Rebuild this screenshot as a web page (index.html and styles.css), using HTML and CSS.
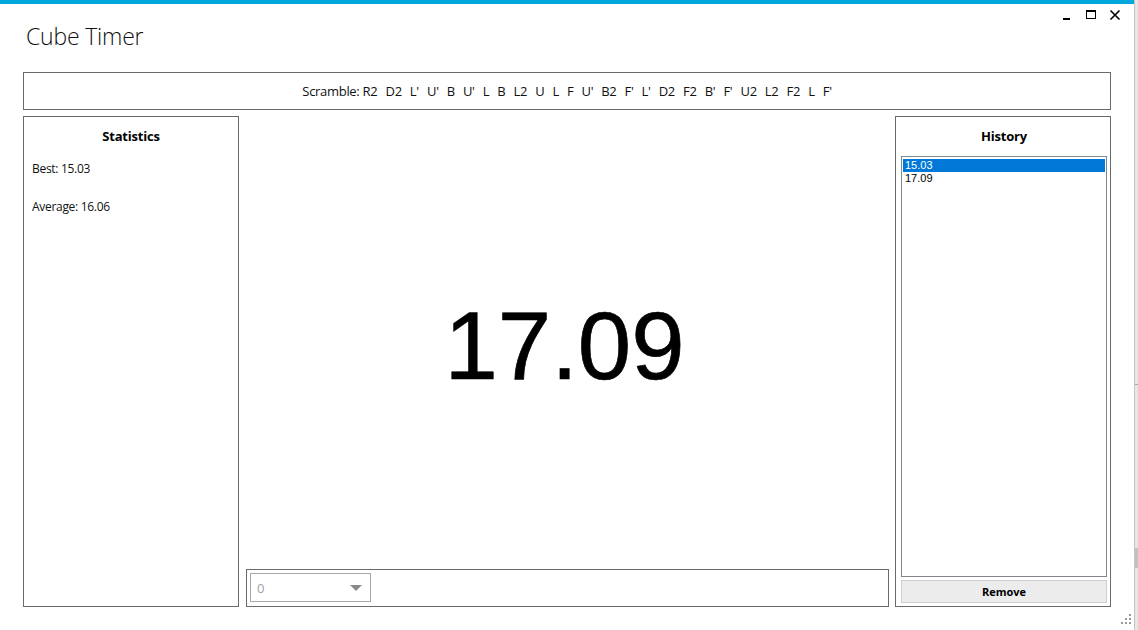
FILE: index.html
```html
<!DOCTYPE html>
<html>
<head>
<meta charset="utf-8">
<link rel="stylesheet" href="styles.css">
</head>
<body>
<div class="screen">
  <div class="window">
    <div class="header">
      <div class="title">Cube Timer</div>
      <div class="controls">
        <svg class="ctl" width="12" height="12" viewBox="0 0 12 12"><rect x="2" y="9" width="7" height="2" fill="#000"/></svg>
        <svg class="ctl" width="12" height="12" viewBox="0 0 12 12"><rect x="1.5" y="1.5" width="9" height="8" fill="none" stroke="#000" stroke-width="1"/><rect x="1" y="1" width="10" height="2" fill="#000"/></svg>
        <svg class="ctl" width="12" height="12" viewBox="0 0 12 12"><path d="M1.5 1.5 L10.5 10.5 M10.5 1.5 L1.5 10.5" stroke="#000" stroke-width="1.6"/></svg>
      </div>
    </div>
    <div class="scramble"><span class="scramble-text"><span class="scramble-label">Scramble: </span>R2 D2 L' U' B U' L B L2 U L F U' B2 F' L' D2 F2 B' F' U2 L2 F2 L F'</span></div>
    <div class="main">
      <div class="panel stats">
        <div class="panel-title">Statistics</div>
        <div class="stat">Best: 15.03</div>
        <div class="stat">Average: 16.06</div>
      </div>
      <div class="center">
        <div class="timer">17.09</div>
        <div class="bottom-bar">
          <div class="combo">
            <span class="combo-val">0</span>
            <span class="combo-arrow"></span>
          </div>
        </div>
      </div>
      <div class="panel history">
        <div class="panel-title">History</div>
        <div class="listbox">
          <div class="item selected">15.03</div>
          <div class="item">17.09</div>
        </div>
        <div class="remove">Remove</div>
      </div>
    </div>
    <div class="grip">
      <span></span><span></span><span></span><span></span><span></span><span></span>
    </div>
  </div>
  <div class="side-strip"></div>
</div>
</body>
</html>
```
FILE: styles.css
```css
* { box-sizing: border-box; }
html, body { margin: 0; padding: 0; background: #fff; }
body { width: 1138px; height: 630px; overflow: hidden; font-family: "Open Sans", "Noto Sans", sans-serif; }

.screen { display: flex; width: 1138px; height: 630px; }

.window {
  position: relative;
  width: 1134px;
  height: 630px;
  border-top: 4px solid #00a8dc;
  padding: 0 23px 0 23px;
  display: flex;
  flex-direction: column;
}

.side-strip {
  width: 4px;
  height: 630px;
  border-left: 1px solid #c4c4c4;
  background: #e6e6e6;
  position: relative;
}
.side-strip::after {
  content: "";
  position: absolute;
  left: 0; right: 0;
  top: 548px; height: 20px;
  background: #c2c2c2;
}
.side-strip::before {
  content: "";
  position: absolute;
  left: 0; right: 0;
  top: 384px; height: 1px;
  background: #a8a8a8;
}

.header {
  height: 68px;
  position: relative;
}
.title {
  position: absolute;
  left: 3px;
  top: 16px;
  font-family: "Open Sans", sans-serif;
  font-weight: 300;
  font-size: 23px;
  color: #111;
  letter-spacing: -0.2px;
}
.controls {
  position: absolute;
  right: -10px;
  top: 5px;
  display: flex;
  gap: 12px;
}
.ctl { display: block; }

.scramble {
  height: 38px;
  border: 1px solid #6a6a6a;
  text-align: center;
  padding-top: 6px;
}
.scramble-text {
  font-size: 13px;
  line-height: 17px;
  color: #111;
  letter-spacing: -0.3px;
  word-spacing: 5px;
}
.scramble-label { word-spacing: 0; }

.main {
  margin-top: 6px;
  height: 491px;
  display: grid;
  grid-template-columns: 216px 656px 216px;
}

.panel {
  border: 1px solid #6a6a6a;
}
.panel-title {
  text-align: center;
  font-weight: 700;
  font-size: 13px;
  color: #000;
  margin-top: 10px;
  line-height: 18px;
  letter-spacing: -0.2px;
}
.stats .panel-title { margin-bottom: 16px; }
.stat {
  font-size: 12px;
  color: #111;
  padding-left: 8px;
  line-height: 16px;
  margin-bottom: 22px;
  letter-spacing: -0.3px;
}

.center {
  display: flex;
  flex-direction: column;
  margin: 0 6px 0 7px;
}
.timer {
  flex: 1;
  display: flex;
  align-items: center;
  justify-content: center;
  font-family: "Liberation Sans", Arial, sans-serif;
  font-size: 96px;
  color: #000;
  padding-top: 6px;
  padding-right: 6px;
  -webkit-text-stroke: 0.7px #000;
}
.bottom-bar {
  height: 38px;
  border: 1px solid #6a6a6a;
  padding: 3px;
}
.combo {
  width: 121px;
  height: 29px;
  border: 1px solid #a8a8a8;
  display: flex;
  align-items: center;
  justify-content: space-between;
  padding: 0 8px 0 6px;
}
.combo-val {
  font-size: 13px;
  color: #a0a0a0;
}
.combo-arrow {
  width: 0; height: 0;
  border-left: 6px solid transparent;
  border-right: 6px solid transparent;
  border-top: 6px solid #8a8a8a;
}

.history {
  display: flex;
  flex-direction: column;
  padding: 0 3px 3px 5px;
}
.history .panel-title { margin-bottom: 11px; }
.listbox {
  flex: 1;
  border: 1px solid #828790;
  padding: 2px 1px 1px 1px;
  font-family: "Liberation Sans", Arial, sans-serif;
  font-size: 11px;
}
.item {
  height: 13px;
  line-height: 13px;
  padding-left: 2px;
  color: #000;
}
.item.selected {
  background: #0078d7;
  color: #fff;
}
.remove {
  margin-top: 3px;
  height: 23px;
  border: 1px solid #cfcfcf;
  background: #ececec;
  text-align: center;
  font-weight: 700;
  font-size: 11px;
  line-height: 21px;
  color: #000;
}

.grip {
  position: absolute;
  right: 3px;
  bottom: 4px;
  width: 12px;
  height: 12px;
}
.grip span {
  position: absolute;
  width: 2px; height: 2px;
  background: #9a9a9a;
}
.grip span:nth-child(1) { right: 0; top: 0; }
.grip span:nth-child(2) { right: 0; top: 4px; }
.grip span:nth-child(3) { right: 4px; top: 4px; }
.grip span:nth-child(4) { right: 0; top: 8px; }
.grip span:nth-child(5) { right: 4px; top: 8px; }
.grip span:nth-child(6) { right: 8px; top: 8px; }
```
